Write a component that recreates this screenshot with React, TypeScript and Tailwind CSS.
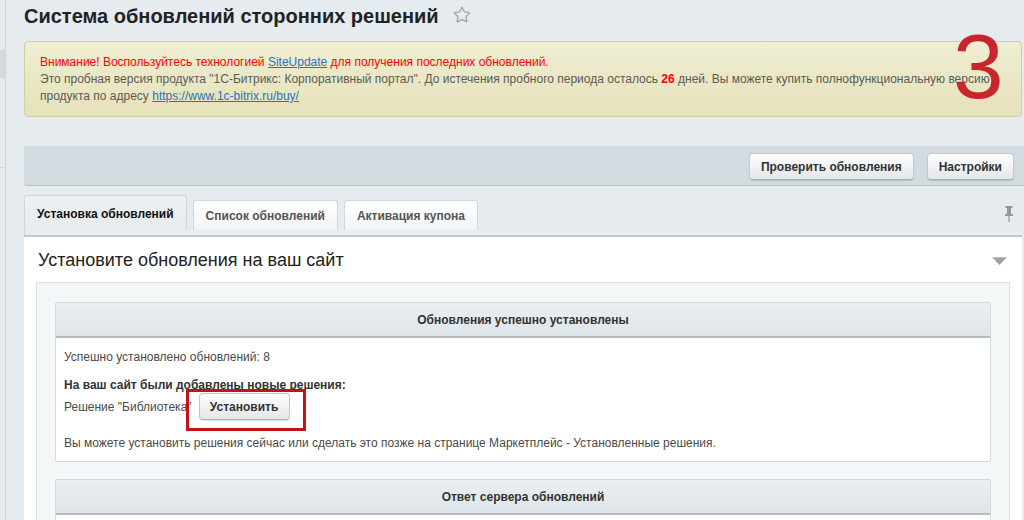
import { Star } from "lucide-react";

const font = "font-['Liberation_Sans',Arial,Helvetica,sans-serif]";

const PinIcon = () => (
  <svg width="8" height="16" viewBox="0 0 8 16" fill="#8f999e">
    <rect x="0.5" y="0" width="7" height="2" rx="0.5" />
    <rect x="2" y="2" width="4" height="6" />
    <rect x="0" y="8" width="8" height="2" rx="0.5" />
    <rect x="3.4" y="10" width="1.2" height="6" />
  </svg>
);

const CollapseArrow = () => (
  <svg width="15" height="8" viewBox="0 0 15 8">
    <path d="M0 0 H15 L7.5 8 Z" fill="#9aa3a8" />
    <path d="M0 0 H15 L14 1 H1 Z" fill="#b9c0c4" />
  </svg>
);

const ToolButton = ({ children }: { children: React.ReactNode }) => (
  <button className="h-[27px] px-[11px] rounded-[4px] border border-[#c3c9cc] border-b-[#aab1b5] bg-linear-to-b from-white to-[#e3e7e9] shadow-[0_1px_1px_rgba(0,0,0,0.12)] text-[12px] font-bold text-[#333]">
    {children}
  </button>
);

const tabs = ["Установка обновлений", "Список обновлений", "Активация купона"];

const Card = ({ title, children }: { title: string; children?: React.ReactNode }) => (
  <div className="border border-[#d3d9dc] rounded-[2px] bg-white">
    <div className="h-[35px] flex items-center justify-center bg-linear-to-b from-[#eaeff1] to-[#dee5e8] border-b-2 border-[#b3bbbf] text-[12px] font-bold text-[#333]">
      {title}
    </div>
    {children}
  </div>
);

export default function App() {
  return (
    <div className={`${font} relative w-[1024px] h-[520px] overflow-hidden bg-[#e5ebee] flex`}>
      {/* collapsed left menu */}
      <aside className="w-[6px] shrink-0 border-r border-[#cdd6da] flex flex-col">
        <div className="h-[50px]" />
        <div className="h-[28px] bg-[#d3dbdf]" />
        <div className="h-[89px]" />
        <div className="h-px bg-[#cdd6da]" />
      </aside>

      <main className="flex-1 pl-[18px] pr-[2px]">
        <header className="h-[41px] flex items-start pt-[4px] gap-[14px]">
          <h1 className="text-[20px] leading-[24px] font-bold text-[#1f2326]">
            Система обновлений сторонних решений
          </h1>
          <Star size={18} strokeWidth={1.75} className="text-[#9aa4aa] mt-[2px]" />
        </header>

        <div className="h-[76px] rounded-[4px] border border-[#d4cea4] bg-linear-to-b from-[#f0eed3] to-[#e5e1ba] px-[15px] pt-[12px] text-[12px] leading-[17px] text-[#5b5b55] whitespace-nowrap">
          <div className="text-[#f00]">
            Внимание! Воспользуйтесь технологией{" "}
            <a className="text-[#2f6fc0] underline">SiteUpdate</a> для получения последних
            обновлений.
          </div>
          <div>
            Это пробная версия продукта "1С-Битрикс: Корпоративный портал". До истечения
            пробного периода осталось <b className="text-[#f00]">26</b> дней. Вы можете купить
            полнофункциональную версию
          </div>
          <div>
            продукта по адресу{" "}
            <a className="text-[#2f6fc0] underline">https://www.1c-bitrix.ru/buy/</a>
          </div>
        </div>

        <div className="mt-[29px] -mr-[4px] h-[40px] rounded-[3px] bg-[#d2dbdf] border-b border-[#b5bfc4] flex items-start justify-end gap-[13px] pt-[7px] pr-[12px]">
          <ToolButton>Проверить обновления</ToolButton>
          <ToolButton>Настройки</ToolButton>
        </div>

        <nav className="mt-[9px] h-[35px] flex items-end">
          <div className="flex items-end gap-[6px] flex-1">
            {tabs.map((tab, i) =>
              i === 0 ? (
                <div
                  key={tab}
                  className="h-[35px] px-[12px] pt-[2px] flex items-center rounded-t-[3px] border border-b-0 border-[#cfd6d9] bg-linear-to-b from-[#eef1f3] to-[#e6ebed] text-[12px] font-bold text-[#111]"
                >
                  {tab}
                </div>
              ) : (
                <div
                  key={tab}
                  className="h-[30px] px-[12px] flex items-center rounded-t-[3px] border border-b-0 border-[#d0d7da] bg-linear-to-b from-white to-[#f1f4f5] text-[12px] font-bold text-[#555]"
                >
                  {tab}
                </div>
              )
            )}
          </div>
          <div className="self-center pr-[9px] pt-[2px]">
            <PinIcon />
          </div>
        </nav>
        <div className="h-[5px] bg-[#e8edef] border-l border-[#cfd6d9]" />
        <div className="h-[2px] bg-[#c0c8cc]" />

        <section className="bg-white px-[12px]">
          <div className="h-[45px] flex items-start justify-between pt-[12px] pl-[2px]">
            <h2 className="text-[18px] leading-[22px] text-[#222]">
              Установите обновления на ваш сайт
            </h2>
            <div className="pt-[8px] pr-[3px]">
              <CollapseArrow />
            </div>
          </div>

          <div className="border border-[#dbe2e5] bg-[#f4f7f8] px-[18px] pt-[19px] flex flex-col gap-[17px]">
            <Card title="Обновления успешно установлены">
              <div className="px-[8px] pt-[11px] pb-[10px] text-[12px] leading-[16px] text-[#4a4a4a]">
                <p>Успешно установлено обновлений: 8</p>
                <p className="mt-[12px] font-bold text-[#333]">
                  На ваш сайт были добавлены новые решения:
                </p>
                <div className="relative flex items-center gap-[7px] h-[27px]">
                  <span>Решение "Библиотека"</span>
                  <button className="h-[27px] w-[91px] rounded-[4px] border border-[#c3c9cc] border-b-[#aab1b5] bg-linear-to-b from-white to-[#e3e7e9] shadow-[0_1px_1px_rgba(0,0,0,0.12)] text-[12px] font-bold text-[#333]">
                    Установить
                  </button>
                  <div className="absolute left-[122px] top-[-4px] w-[120px] h-[42px] border-[3px] border-[#c4121b]" />
                </div>
                <p className="mt-[15px]">
                  Вы можете установить решения сейчас или сделать это позже на странице
                  Маркетплейс - Установленные решения.
                </p>
              </div>
            </Card>
            <Card title="Ответ сервера обновлений">
              <div className="h-[40px]" />
            </Card>
          </div>
        </section>
      </main>

      {/* step number */}
      <span className="absolute left-[953px] top-[21px] text-[91px] leading-[91px] text-[#c8262c] pointer-events-none">
        3
      </span>
    </div>
  );
}
